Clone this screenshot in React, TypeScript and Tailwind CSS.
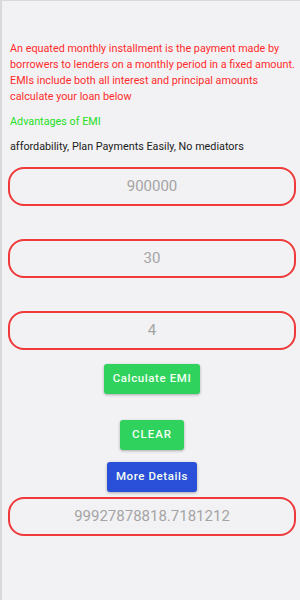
import React from "react";

export default function App() {
  const inputCls =
    "w-full h-[39px] rounded-[16px] border-2 border-[#ee3a3a] bg-transparent flex items-center justify-center text-[15px] text-[#a4a4a4]";
  const btn =
    "h-[30px] rounded-[3px] text-[#f4fff4] text-[11.5px] font-medium tracking-[0.6px] shadow-[0_1px_3px_rgba(0,0,0,0.3)]";
  return (
    <div
      className="w-[300px] h-[600px] bg-[#f2f2f4] border-l-2 border-t border-[#d9d9db] overflow-hidden"
      style={{ fontFamily: "Roboto, 'Liberation Sans', sans-serif" }}
    >
      <div className="pl-[6px] pr-[4px] pt-[40px]">
        <p className="pl-[2px] text-[10.8px] leading-[16px] text-[#ff2b2b]">
          An equated monthly installment is the payment made by borrowers to lenders on a monthly period in a fixed amount. EMIs include both all interest and principal amounts calculate your loan below
        </p>
        <p className="pl-[2px] mt-[9px] text-[10.8px] leading-[16px] text-[#22e022]">Advantages of EMI</p>
        <p className="pl-[2px] mt-[9px] text-[10.8px] leading-[16px] text-[#1a1a1a]">
          affordability, Plan Payments Easily, No mediators
        </p>
        <div className="mt-[12px] flex flex-col items-center">
          <div className={inputCls}>900000</div>
          <div className={"mt-[33px] " + inputCls}>30</div>
          <div className={"mt-[33px] " + inputCls}>4</div>
          <button className={"mt-[14px] w-[96px] bg-[#2fd25c] " + btn}>Calculate EMI</button>
          <button className={"mt-[26px] w-[64px] bg-[#2fd25c] tracking-[1px] " + btn}>CLEAR</button>
          <button className={"mt-[12px] w-[90px] bg-[#2a4fd8] " + btn}>More Details</button>
          <div className={"mt-[5px] " + inputCls}>99927878818.7181212</div>
        </div>
      </div>
    </div>
  );
}
